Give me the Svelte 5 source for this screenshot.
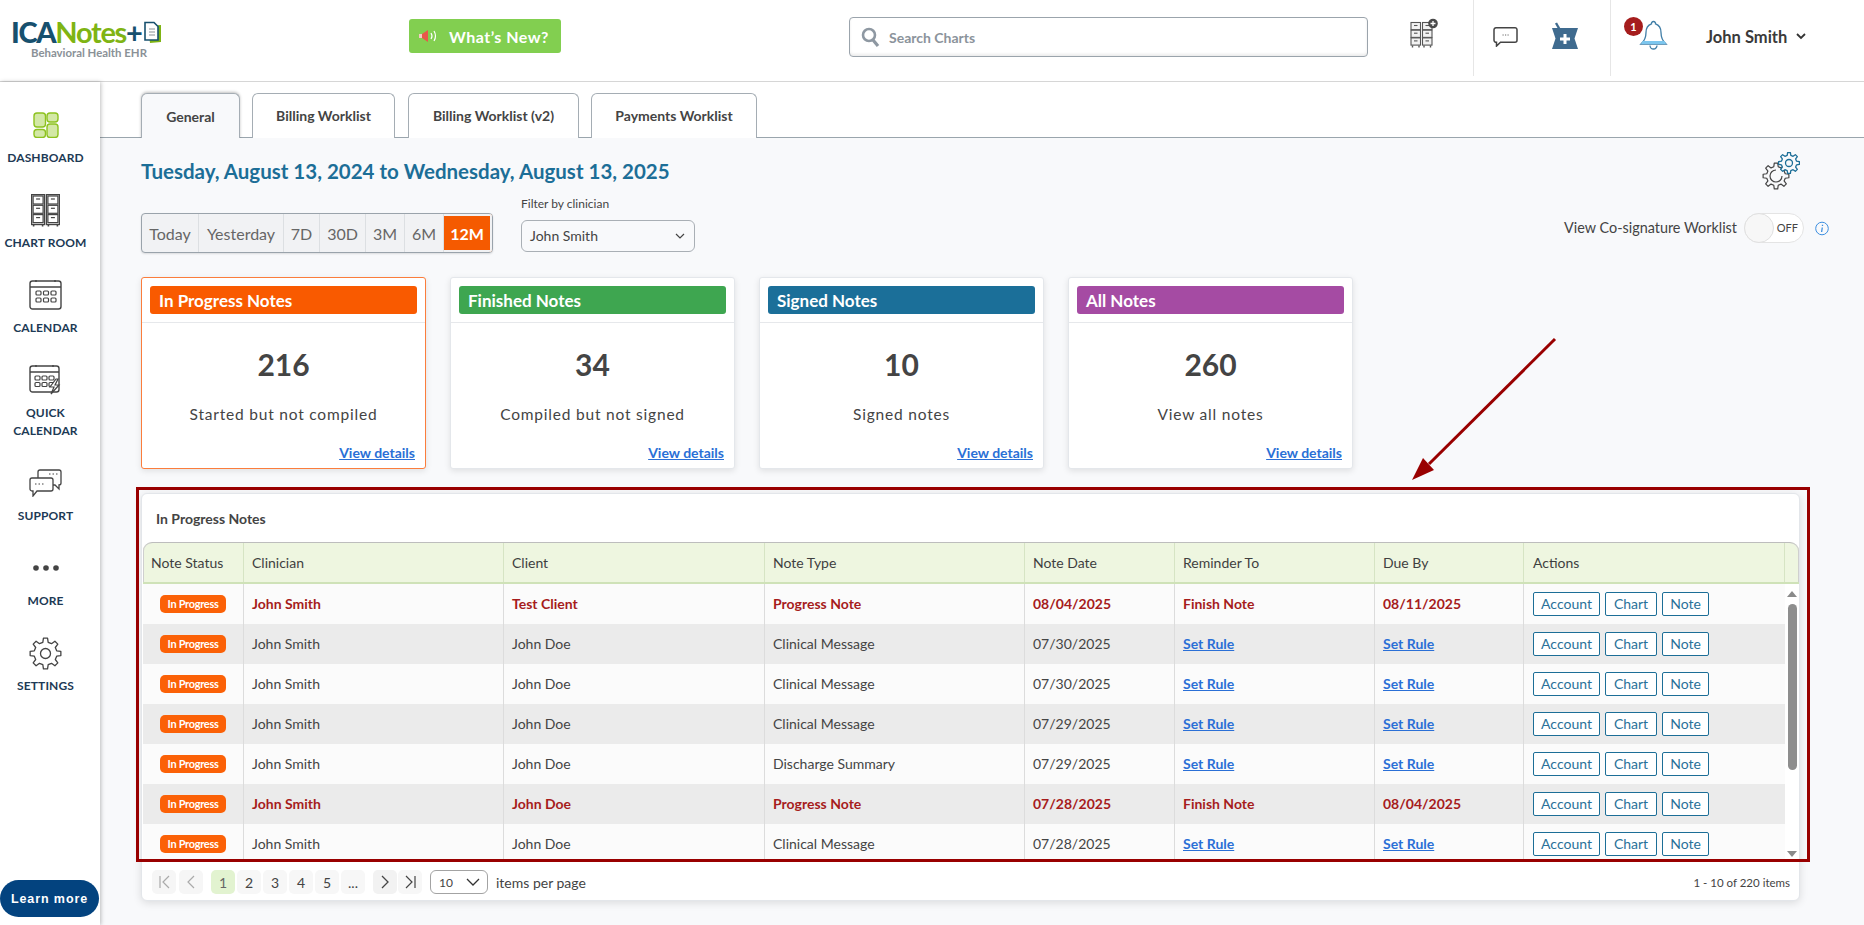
<script>
  function gear(cx, cy, ro, ri, n) {
    const step = (Math.PI * 2) / n;
    let d = '';
    for (let i = 0; i < n; i++) {
      const a = i * step - Math.PI / 2;
      const pts = [
        [ri, a - step * 0.3],
        [ro, a - step * 0.17],
        [ro, a + step * 0.17],
        [ri, a + step * 0.3]
      ];
      for (const [r, t] of pts) {
        d += (d ? 'L' : 'M') + (cx + r * Math.cos(t)).toFixed(2) + ' ' + (cy + r * Math.sin(t)).toFixed(2);
      }
    }
    return d + 'Z';
  }

  const tabs = ['General', 'Billing Worklist', 'Billing Worklist (v2)', 'Payments Worklist'];
  const ranges = [
    { t: 'Today', w: 57 }, { t: 'Yesterday', w: 85 }, { t: '7D', w: 36 }, { t: '30D', w: 46 },
    { t: '3M', w: 39 }, { t: '6M', w: 39 }, { t: '12M', w: 48 }
  ];
  const cards = [
    { cls: 'orange', title: 'In Progress Notes', n: 216, d: 'Started but not compiled' },
    { cls: 'green', title: 'Finished Notes', n: 34, d: 'Compiled but not signed' },
    { cls: 'blue', title: 'Signed Notes', n: 10, d: 'Signed notes' },
    { cls: 'purple', title: 'All Notes', n: 260, d: 'View all notes' }
  ];
  const heads = ['Note Status', 'Clinician', 'Client', 'Note Type', 'Note Date', 'Reminder To', 'Due By', 'Actions'];
  const rows = [
    { u: 1, c: 'Test Client', t: 'Progress Note', d: '08/04/2025', r: 'Finish Note', b: '08/11/2025' },
    { c: 'John Doe', t: 'Clinical Message', d: '07/30/2025' },
    { c: 'John Doe', t: 'Clinical Message', d: '07/30/2025' },
    { c: 'John Doe', t: 'Clinical Message', d: '07/29/2025' },
    { c: 'John Doe', t: 'Discharge Summary', d: '07/29/2025' },
    { u: 1, c: 'John Doe', t: 'Progress Note', d: '07/28/2025', r: 'Finish Note', b: '08/04/2025' },
    { c: 'John Doe', t: 'Clinical Message', d: '07/28/2025' }
  ];
  const drawers = [0, 1, 2];
</script>

<div class="page">
  <header class="top">
    <div class="logo">
      <div class="logo-main">
        <span class="ica">ICA</span><span class="notes">Notes</span><span class="plus">+</span>
        <svg class="logo-doc" width="19" height="23" viewBox="0 0 19 23">
          <path d="M5 5l13-1 0 17-11 1z" fill="#7fb414" />
          <path d="M2 1.500h9l4 4v13.500H2z" fill="#fff" stroke="#17506e" stroke-width="1.600" />
          <path d="M6 8h6M6 11h6M6 14h6" stroke="#8a9197" stroke-width="1" />
        </svg>
      </div>
      <div class="logo-sub">Behavioral Health EHR</div>
    </div>

    <button class="whatsnew">
      <svg width="22" height="16" viewBox="0 0 22 16">
        <path d="M1 6h3l6-4v12L4 10H1z" fill="#e8584a" />
        <path d="M1 6h3v4H1z" fill="#f5c9c3" />
        <path d="M13 5q2 3 0 6M16 3q3 5 0 10" fill="none" stroke="#fff" stroke-width="1.200" />
      </svg>
      <span>What’s New?</span>
    </button>

    <div class="search">
      <svg width="19" height="21" viewBox="0 0 19 21">
        <circle cx="8" cy="8" r="6" fill="none" stroke="#8e98a2" stroke-width="2.600" />
        <path d="M12 13l5 6" stroke="#8e98a2" stroke-width="3.200" />
      </svg>
      <span>Search Charts</span>
    </div>

    <svg class="ic-cab" width="30" height="30" viewBox="0 0 30 30">
      <g fill="none" stroke="#555" stroke-width="1.100">
        {#each [1, 12.5] as cx}
          {#each drawers as i}
            <rect x={cx} y={4.5 + i * 7.7} width="9.500" height="7.200" fill="#f2f2f2" />
            <path d="M{cx + 3} {7.5 + i * 7.7}h3.500" />
          {/each}
          <path d="M{cx + 1.5} 27.500v2M{cx + 8} 27.500v2" stroke-width="1.400" />
        {/each}
      </g>
      <circle cx="23" cy="5.500" r="4.800" fill="#4a4a4a" />
      <path d="M23 3v5M20.500 5.500h5" stroke="#fff" stroke-width="1.300" />
    </svg>
    <div class="vsep first"></div>
    <svg class="ic-chat" width="25" height="20" viewBox="0 0 25 20">
      <path d="M3 .8h19a2 2 0 0 1 2 2v10.500a2 2 0 0 1-2 2H7.500l-4 3.800v-3.800a2.200 2.200 0 0 1-2.500-2V2.800a2 2 0 0 1 2-2z" fill="#fff" stroke="#444" stroke-width="1.500" />
      <path d="M9.500 8h1.200M12 8h1.200M14.500 8h1.200" stroke="#666" stroke-width="1" />
    </svg>
    <svg class="ic-rx" width="28" height="28" viewBox="0 0 28 28">
      <path d="M5 1l4 7" stroke="#3f6b8f" stroke-width="2.400" />
      <path d="M1 6h26l-3.500 10.500L27 27H1l3.500-10.500z" fill="#3f6b8f" />
      <path d="M14 12v10M9 17h10" stroke="#fff" stroke-width="3" />
    </svg>
    <div class="vsep second"></div>
    <div class="bell">
      <span class="badge">1</span>
      <svg width="29" height="30" viewBox="0 0 29 30">
        <path d="M14.500 1.500a2 2 0 0 1 2 2.400c4 1.400 5.500 4.600 5.500 8.600 0 5 1 8 5 11.500H2c4-3.500 5-6.500 5-11.500 0-4 1.500-7.200 5.500-8.600a2 2 0 0 1 2-2.400z" fill="#fff" stroke="#3f7da6" stroke-width="1.300" />
        <path d="M2 24h25l-1.500-3H3.500z" fill="#7cc6ee" />
        <path d="M11 25.500a3.500 3.500 0 0 0 7 0" fill="none" stroke="#3f7da6" stroke-width="1.300" />
      </svg>
    </div>
    <div class="user">John Smith</div>
    <svg class="user-chev" width="10" height="7" viewBox="0 0 10 7"><path d="M1 1l4 4 4-4" fill="none" stroke="#333" stroke-width="1.800" /></svg>
  </header>

  <div class="body">
    <aside class="side">
      <div class="nav">
        <div class="nav-icon">
          <svg width="26" height="26" viewBox="0 0 26 26" fill="#d3e8a6" stroke="#8dc21f" stroke-width="1.400">
            <rect x="1" y="1" width="11.500" height="14" rx="3" />
            <rect x="14" y="1" width="11" height="9" rx="3" />
            <rect x="1" y="17.500" width="11.500" height="8" rx="3" />
            <rect x="14" y="12" width="11" height="13.500" rx="3" />
          </svg>
        </div>
        <div class="nav-label">DASHBOARD</div>
      </div>
      <div class="nav">
        <div class="nav-icon">
          <svg width="29" height="33" viewBox="0 0 29 33" fill="none" stroke="#444" stroke-width="1.200">
            {#each [0.6, 15.4] as cx}
              <rect x={cx} y="0.600" width="13" height="30" fill="#ddd" />
              {#each drawers as i}
                <rect x={cx + 1.5} y={2 + i * 9.3} width="10" height="8" fill="#fff" />
                <path d="M{cx + 4.5} {5 + i * 9.3}h4" />
              {/each}
              <path d="M{cx + 2} 30.500v2M{cx + 11} 30.500v2" stroke-width="1.600" />
            {/each}
          </svg>
        </div>
        <div class="nav-label">CHART ROOM</div>
      </div>
      <div class="nav">
        <div class="nav-icon">
          <svg width="33" height="32" viewBox="0 0 33 32" fill="none" stroke="#444">
            <rect x="1" y="2" width="31" height="28" rx="2.500" stroke-width="1.400" />
            <path d="M1 8h31M7 1v2M26 1v2" stroke-width="1.400" />
            {#each [7, 14.5, 22] as x}
              {#each [12, 19] as y}
                <rect {x} {y} width="5" height="4" rx="1" stroke-width="1.200" />
              {/each}
            {/each}
          </svg>
        </div>
        <div class="nav-label">CALENDAR</div>
      </div>
      <div class="nav">
        <div class="nav-icon">
          <svg width="33" height="32" viewBox="0 0 33 32" fill="none" stroke="#444">
            <rect x="1" y="2" width="29" height="26" rx="2.500" stroke-width="1.400" />
            <path d="M1 8h29M7 1v2M24 1v2" stroke-width="1.400" />
            {#each [6, 13, 20] as x}
              {#each [12, 18.5] as y}
                <rect {x} {y} width="5" height="4" rx="1" stroke-width="1.200" />
              {/each}
            {/each}
            <path d="M27 15l-6 8h4l-3 7 8-9h-4l3-6z" fill="#fff" stroke-width="1.200" />
          </svg>
        </div>
        <div class="nav-label">QUICK<br />CALENDAR</div>
      </div>
      <div class="nav">
        <div class="nav-icon">
          <svg width="33" height="28" viewBox="0 0 33 28" fill="#fff" stroke="#444" stroke-width="1.300">
            <path d="M11 1h19a2 2 0 0 1 2 2v11a2 2 0 0 1-2 2v4l-4-4H11a2 2 0 0 1-2-2V3a2 2 0 0 1 2-2z" />
            <path d="M3 9h19a2 2 0 0 1 2 2v9a2 2 0 0 1-2 2H8l-4 5v-5H3a2 2 0 0 1-2-2v-9a2 2 0 0 1 2-2z" />
            <path d="M20 5h1.500M23.500 5h1.500M27 5h1.500" stroke-width="1" />
            <path d="M6 15h1.500M9.500 15h1.500M13 15h1.500" stroke-width="1" />
          </svg>
        </div>
        <div class="nav-label">SUPPORT</div>
      </div>
      <div class="nav">
        <div class="nav-icon">
          <svg width="26" height="6" viewBox="0 0 26 6" fill="#444">
            <circle cx="3" cy="3" r="2.800" /><circle cx="13" cy="3" r="2.800" /><circle cx="23" cy="3" r="2.800" />
          </svg>
        </div>
        <div class="nav-label">MORE</div>
      </div>
      <div class="nav">
        <div class="nav-icon">
          <svg width="33" height="33" viewBox="0 0 33 33" fill="none" stroke="#444" stroke-width="1.300" stroke-linejoin="round">
            <path d={gear(16.5, 16.5, 15.5, 11.5, 8)} />
            <circle cx="16.500" cy="16.500" r="5" />
          </svg>
        </div>
        <div class="nav-label">SETTINGS</div>
      </div>
      <button class="learn">Learn more</button>
    </aside>

    <main class="main">
      <div class="tabs">
        {#each tabs as t, i}
          <div class="tab" class:active={i === 0}>{t}</div>
        {/each}
      </div>

      <div class="content">
        <div class="title-row">
          <h1>Tuesday, August 13, 2024 to Wednesday, August 13, 2025</h1>
          <svg class="cfg" width="38" height="38" viewBox="0 0 38 38" fill="none" stroke-linejoin="round">
            <path d={gear(14, 24, 13, 9.5, 8)} stroke="#444" stroke-width="1.200" />
            <path d="M14 18a6 6 0 1 0 6 6" stroke="#444" stroke-width="1.200" />
            <path d={gear(27, 11, 10.5, 7.8, 8)} stroke="#1c6e97" fill="#f8f9fb" stroke-width="1.300" />
            <circle cx="27" cy="11" r="3.500" stroke="#1c6e97" stroke-width="1.300" />
          </svg>
        </div>

        <div class="controls">
          <div class="ranges">
            {#each ranges as r}
              <div class="range" class:on={r.t === '12M'} style="width:{r.w}px">{r.t}</div>
            {/each}
          </div>
          <div class="filter">
            <div class="filter-label">Filter by clinician</div>
            <div class="select">
              <span>John Smith</span>
              <svg width="10" height="6" viewBox="0 0 10 6"><path d="M1 1l4 4 4-4" fill="none" stroke="#444" stroke-width="1.200" /></svg>
            </div>
          </div>
          <div class="cosign">
            <span>View Co-signature Worklist</span>
            <div class="toggle"><i></i><b>OFF</b></div>
            <svg width="14" height="15" viewBox="0 0 14 15">
              <circle cx="7" cy="7.500" r="6.300" fill="none" stroke="#3d8fe0" stroke-width="1" />
              <path d="M7.300 6.500L6.600 11M7.500 3.800v1.200" stroke="#3d8fe0" stroke-width="1.300" fill="none" />
            </svg>
          </div>
        </div>

        <div class="cards">
          {#each cards as c, i}
            <div class="card" class:hot={i === 0}>
              <div class="card-head"><div class="card-label {c.cls}">{c.title}</div></div>
              <div class="card-num">{c.n}</div>
              <div class="card-desc">{c.d}</div>
              <a class="card-link" href="#details">View details</a>
            </div>
          {/each}
        </div>

        <section class="panel">
          <div class="frame"></div>
          <h2>In Progress Notes</h2>
          <div class="grid">
            <div class="row head">
              {#each heads as h}<div class="cell">{h}</div>{/each}
              <div class="cell sb"></div>
            </div>
            <div class="grid-body">
              <div class="rows">
                {#each rows as r, i}
                  <div class="row" class:alt={i % 2 === 1} class:urgent={r.u}>
                    <div class="cell stat"><span class="pill">In Progress</span></div>
                    <div class="cell txt">John Smith</div>
                    <div class="cell txt">{r.c}</div>
                    <div class="cell txt">{r.t}</div>
                    <div class="cell txt">{r.d}</div>
                    <div class="cell txt">{#if r.r}{r.r}{:else}<a href="#rule">Set Rule</a>{/if}</div>
                    <div class="cell txt">{#if r.b}{r.b}{:else}<a href="#rule">Set Rule</a>{/if}</div>
                    <div class="cell acts">
                      <button>Account</button><button>Chart</button><button>Note</button>
                    </div>
                  </div>
                {/each}
              </div>
              <div class="scroll">
                <i class="up"></i>
                <i class="thumb"></i>
                <i class="down"></i>
              </div>
            </div>
          </div>
          <div class="pager">
            <div class="pg dim"><svg width="11" height="14" viewBox="0 0 11 14"><path d="M1 1v12M10 1L4 7l6 6" fill="none" stroke="#aaa" stroke-width="1.200" /></svg></div>
            <div class="pg dim"><svg width="8" height="14" viewBox="0 0 8 14"><path d="M7 1L1 7l6 6" fill="none" stroke="#aaa" stroke-width="1.200" /></svg></div>
            <div class="pg cur">1</div>
            <div class="pg">2</div>
            <div class="pg">3</div>
            <div class="pg">4</div>
            <div class="pg">5</div>
            <div class="pg">...</div>
            <div class="pg nx"><svg width="8" height="14" viewBox="0 0 8 14"><path d="M1 1l6 6-6 6" fill="none" stroke="#444" stroke-width="1.300" /></svg></div>
            <div class="pg last"><svg width="11" height="14" viewBox="0 0 11 14"><path d="M1 1l6 6-6 6M10 1v12" fill="none" stroke="#444" stroke-width="1.200" /></svg></div>
            <div class="per">
              <span>10</span>
              <svg width="14" height="8" viewBox="0 0 14 8"><path d="M1 1l6 6 6-6" fill="none" stroke="#333" stroke-width="1.300" /></svg>
            </div>
            <span class="per-label">items per page</span>
            <span class="count">1 - 10 of 220 items</span>
          </div>
        </section>
      </div>
    </main>
  </div>

  <svg class="arrow" width="160" height="160" viewBox="0 0 160 160">
    <path d="M150 4L24 129" stroke="#990000" stroke-width="3" fill="none" />
    <path d="M7 145L18 123L29 135Z" fill="#990000" />
  </svg>
</div>

<style>
  :global(body) { margin: 0; background: #fff; }
  .page {
    position: relative;
    width: 1864px;
    height: 925px;
    overflow: hidden;
    font-family: Lato, "Open Sans", sans-serif;
    color: #444;
  }
  button { font-family: inherit; cursor: pointer; }

  .top {
    display: flex;
    align-items: flex-start;
    height: 81px;
    border-bottom: 1px solid #d6d6d6;
    background: #fff;
    box-sizing: content-box;
  }
  .logo { width: 409px; padding-left: 11px; box-sizing: border-box; margin-top: 18px; flex: none; }
  .logo-main { display: flex; align-items: center; font-size: 29px; font-weight: 700; letter-spacing: -1.300px; line-height: 28px; height: 28px; }
  .ica { color: #17506e; font-weight: 900; }
  .notes { color: #7fb414; }
  .plus { color: #17506e; }
  .logo-doc { margin-left: 1px; flex: none; }
  .logo-sub { margin-left: 20px; font-size: 11.400px; line-height: 14px; color: #8a9197; font-weight: 700; }

  .whatsnew {
    display: flex;
    align-items: center;
    gap: 9px;
    width: 152px;
    height: 34px;
    padding: 0 0 0 9px;
    flex: none;
    border: 0;
    border-radius: 3px;
    background: #82cf50;
    color: #fff;
    font-size: 16px;
    font-weight: 700;
    letter-spacing: .5px;
    margin-top: 19px;
  }
  .search {
    display: flex;
    align-items: center;
    gap: 9px;
    width: 519px;
    height: 40px;
    flex: none;
    box-sizing: border-box;
    margin-left: 288px;
    margin-top: 17px;
    padding-left: 11px;
    border: 1px solid #9ba4ac;
    border-radius: 4px;
    background: #fff;
    box-shadow: inset 0 -2px 3px rgba(0, 0, 0, .08);
    font-size: 14px;
    font-weight: 700;
    color: #8b939b;
  }
  .ic-cab { margin-left: 42px; margin-top: 18px; flex: none; }
  .vsep { width: 1px; height: 76px; background: #e6e6e6; flex: none; }
  .first { margin-left: 33px; }
  .ic-chat { margin-left: 19px; margin-top: 27px; flex: none; }
  .ic-rx { margin-left: 33px; margin-top: 22px; flex: none; }
  .second { margin-left: 31px; }
  .bell { position: relative; width: 43px; height: 30px; margin-left: 14px; margin-top: 20px; flex: none; display: flex; justify-content: flex-end; }
  .badge {
    position: absolute;
    left: -1px;
    top: -3px;
    width: 19px;
    height: 19px;
    border-radius: 50%;
    background: #a51d1d;
    color: #fff;
    font-size: 11px;
    font-weight: 700;
    line-height: 19px;
    text-align: center;
    z-index: 1;
  }
  .user { margin-left: 38px; margin-top: 27px; font-size: 16.500px; font-weight: 700; line-height: 20px; color: #3a3a3a; }
  .user-chev { margin-left: 9px; margin-top: 33px; }

  .body { display: flex; height: 843px; }
  .side {
    width: 100px;
    flex: none;
    box-sizing: border-box;
    display: flex;
    flex-direction: column;
    padding-top: 25px;
    background: #fff;
    box-shadow: 1px 0 4px rgba(0, 0, 0, .25);
    z-index: 1;
  }
  .nav { width: 91px; margin-bottom: 25px; text-align: center; }
  .nav-icon { height: 36px; display: flex; align-items: center; justify-content: center; }
  .nav-label { margin-top: 6px; font-size: 12px; font-weight: 700; line-height: 18px; color: #1d3a55; letter-spacing: .1px; }
  .learn {
    margin-top: auto;
    margin-bottom: 8px;
    width: 99px;
    height: 37px;
    flex: none;
    padding: 0;
    border: 0;
    border-radius: 19px;
    background: #03437f;
    color: #fff;
    font-family: "Liberation Sans", Arial, sans-serif;
    font-size: 12.500px;
    font-weight: 700;
    letter-spacing: .9px;
  }

  .main { flex: 1; display: flex; flex-direction: column; min-width: 0; }
  .tabs {
    display: flex;
    gap: 12px;
    height: 56px;
    box-sizing: border-box;
    padding: 11px 0 0 41px;
    border-bottom: 1px solid #9aa5ad;
    background: #fff;
  }
  .tab {
    height: 45px;
    box-sizing: border-box;
    padding: 0 0 2px;
    display: flex;
    align-items: center;
    justify-content: center;
    border: 1px solid #a5adb4;
    border-bottom: 0;
    border-radius: 6px 6px 0 0;
    font-size: 14px;
    font-weight: 700;
    color: #444;
    background: #fff;
  }
  .tab:nth-child(1) { width: 99px; }
  .tab:nth-child(2) { width: 143px; margin-right: 1px; }
  .tab:nth-child(3) { width: 171px; }
  .tab:nth-child(4) { width: 166px; }
  .tab.active { background: #f8f9fb; box-shadow: 0 -1px 3px rgba(0, 0, 0, .25); height: 46px; padding-bottom: 1px; }

  .content { flex: 1; background: #f8f9fb; padding: 14px 35px 0 41px; }
  .title-row { display: flex; align-items: center; justify-content: space-between; height: 38px; padding-right: 29px; }
  h1 { margin: 0 0 1px; font-size: 20.500px; font-weight: 700; color: #1c6e97; }
  .cfg { flex: none; }

  .controls { display: flex; align-items: flex-end; height: 56px; margin-top: 7px; }
  .ranges {
    display: flex;
    box-sizing: border-box;
    height: 40px;
    border: 1px solid #9aa3ab;
    border-radius: 4px;
    background: #f1f2f4;
    box-shadow: 0 1px 2px rgba(0, 0, 0, .12);
    overflow: hidden;
    flex: none;
  }
  .range {
    display: flex;
    align-items: center;
    justify-content: center;
    flex: none;
    box-sizing: border-box;
    border-right: 1px solid #dcdfe2;
    font-size: 16px;
    color: #666;
  }
  .range:last-child { border-right: 0; }
  .range.on { background: #f55a00; color: #fff; font-weight: 700; border: 2px solid #f1f2f4; border-left: 0; }
  .filter { margin-left: 28px; margin-bottom: 1px; }
  .filter-label { font-size: 12px; line-height: 14px; color: #444; }
  .select {
    display: flex;
    align-items: center;
    justify-content: space-between;
    width: 174px;
    height: 32px;
    margin-top: 9px;
    box-sizing: border-box;
    padding: 0 9px 2px 8px;
    border: 1px solid #a9afb5;
    border-radius: 6px;
    font-size: 14px;
    color: #444;
  }
  .select svg { margin-top: 2px; }
  .cosign { display: flex; align-items: center; margin-left: auto; margin-bottom: 10px; font-size: 14.400px; color: #444; }
  .cosign span { margin-top: -2px; }
  .toggle {
    position: relative;
    width: 60px;
    height: 30px;
    box-sizing: border-box;
    margin: 0 11px 0 7px;
    border: 1px solid #e4e4e4;
    border-radius: 15px;
    background: #fff;
  }
  .toggle i {
    position: absolute;
    left: -1px;
    top: -1px;
    width: 30px;
    height: 30px;
    box-sizing: border-box;
    border: 1px solid #e0e0e0;
    border-radius: 50%;
    background: #f7f7f7;
  }
  .toggle b { position: absolute; right: 5px; top: 7px; font-size: 11px; line-height: 14px; font-weight: 400; color: #444; }

  .cards { display: flex; gap: 24px; margin-top: 24px; }
  .card {
    display: flex;
    flex-direction: column;
    width: 285px;
    height: 192px;
    box-sizing: border-box;
    border: 1px solid #e4e7eb;
    border-radius: 3px;
    background: #fff;
    box-shadow: 0 2px 6px rgba(0, 0, 0, .1);
    text-align: center;
  }
  .card.hot { border-color: #fb7d3c; }
  .card-head { height: 45px; box-sizing: border-box; padding: 8px; border-bottom: 1px solid #e6e8eb; }
  .card-label {
    height: 28px;
    padding-left: 9px;
    border-radius: 3px;
    color: #fff;
    font-size: 17px;
    font-weight: 700;
    line-height: 30px;
    text-align: left;
  }
  .orange { background: #f95a00; }
  .green { background: #3ea650; }
  .blue { background: #1b6f99; }
  .purple { background: #a54ba3; }
  .card-num { margin-top: 23px; font-size: 30px; font-weight: 700; line-height: 36px; color: #444; }
  .card-desc { margin-top: 21px; font-size: 15.500px; line-height: 22px; color: #444; letter-spacing: .8px; }
  .card-link { margin-top: 19px; margin-right: 10px; align-self: flex-end; font-size: 14px; font-weight: 700; line-height: 18px; color: #2a6fd6; }

  .panel {
    position: relative;
    width: 1659px;
    height: 408px;
    margin-top: 24px;
    box-sizing: border-box;
    border: 1px solid #e3e6ea;
    border-radius: 6px;
    background: #fff;
    box-shadow: 0 2px 8px rgba(0, 0, 0, .12);
  }
  .frame {
    position: absolute;
    left: -6px;
    top: -7px;
    right: -11px;
    bottom: 38px;
    border: 3px solid #990000;
    pointer-events: none;
    z-index: 3;
  }
  h2 { margin: 0; height: 48px; box-sizing: border-box; padding: 16px 0 0 14px; font-size: 14px; font-weight: 700; line-height: 18px; color: #444; }
  .grid { margin-left: 1px; }
  .row {
    display: grid;
    grid-template-columns: 101px 260px 261px 260px 150px 200px 149px 261px;
    height: 40px;
    background: #fbfbfb;
    font-size: 14px;
    color: #444;
  }
  .row.alt { background: #ebebeb; }
  .cell {
    display: flex;
    align-items: center;
    box-sizing: border-box;
    padding-left: 8px;
    border-right: 1px solid #dcdcdc;
    white-space: nowrap;
    overflow: hidden;
  }
  .cell.txt { padding-bottom: 2px; }
  .row > .cell:nth-child(8) { border-right: 0; padding-left: 9px; }
  .row.head {
    grid-template-columns: 101px 260px 261px 260px 150px 200px 149px 261px 15px;
    height: 42px;
    background: #eef6e0;
    border-top: 1px solid #bdbdbd;
    border-bottom: 2px solid #cfe2b8;
    box-shadow: inset 1px 0 #cfcfcf, inset -1px 0 #cfcfcf;
    border-radius: 9px 9px 0 0;
    box-sizing: border-box;
    color: #3f3f3f;
  }
  .row.head .cell { border-right: 1px solid #d6e4c4; }
  .row.head .cell.sb { border-right: 0; }
  .urgent { color: #a61c1c; font-weight: 700; }
  .cell a { color: #2a6fd6; font-weight: 700; }
  .stat { justify-content: center; padding-left: 0; }
  .pill {
    display: block;
    width: 66px;
    height: 18px;
    border-radius: 5px;
    background: #fb6107;
    color: #fff;
    font-size: 11px;
    font-weight: 700;
    line-height: 18px;
    text-align: center;
    letter-spacing: -.3px;
  }
  .acts { gap: 5px; font-weight: 400; }
  .acts button {
    height: 24px;
    padding: 0;
    border: 1px solid #1c6e97;
    border-radius: 2px;
    background: #fff;
    color: #2a7199;
    font-size: 14px;
    line-height: 20px;
  }
  .acts button:nth-child(1) { width: 67px; }
  .acts button:nth-child(2) { width: 52px; }
  .acts button:nth-child(3) { width: 47px; }
  .grid-body { display: flex; height: 277px; overflow: hidden; }
  .rows { width: 1642px; flex: none; }
  .scroll { width: 15px; position: relative; display: flex; flex-direction: column; align-items: center; }
  .scroll i { display: block; flex: none; }
  .up { margin-top: 7px; width: 0; border: 5px solid transparent; border-top: 0; border-bottom: 6px solid #8a8a8a; }
  .thumb { margin-top: 7px; width: 9px; height: 166px; border-radius: 5px; background: #8e8e8e; }
  .down { margin-top: 81px; width: 0; border: 5px solid transparent; border-bottom: 0; border-top: 6px solid #8a8a8a; }

  .pager { display: flex; align-items: center; height: 24px; margin: 9px 0 0 10px; font-size: 14px; color: #444; gap: 2px; }
  .pg {
    width: 24px;
    height: 24px;
    display: flex;
    align-items: center;
    justify-content: center;
    border-radius: 5px;
    background: #f7f7f7;
    flex: none;
  }
  .pg.dim { background: #f6f6f6; }
  .pg.dim + .pg.dim { margin-left: 1px; margin-right: 6px; }
  .pg.cur { background: #e2f3d0; color: #666; }
  .pg.nx { margin-left: 6px; background: #f2f2f2; }
  .pg.last { margin-left: -1px; }
  .per {
    display: flex;
    align-items: center;
    justify-content: space-between;
    width: 58px;
    height: 24px;
    box-sizing: border-box;
    margin-left: 6px;
    padding: 0 7px 0 8px;
    border: 1px solid #a3a3a3;
    border-radius: 6px;
    background: #fff;
    font-size: 12px;
  }
  .per-label { margin-left: 6px; font-size: 14px; }
  .count { margin-left: auto; margin-right: 9px; font-size: 11.500px; }

  .arrow { position: absolute; left: 1405px; top: 335px; z-index: 4; }
</style>
